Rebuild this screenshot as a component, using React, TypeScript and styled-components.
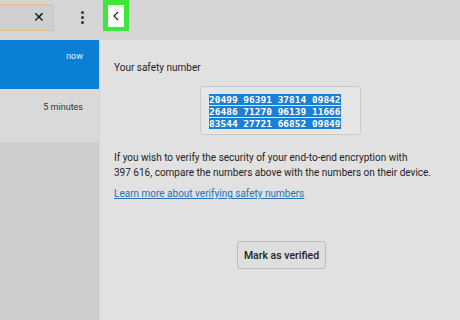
import React from "react";
import styled, { createGlobalStyle } from "styled-components";

const Global = createGlobalStyle`
  html, body { margin: 0; padding: 0; }
  body { font-family: Roboto, "Liberation Sans", sans-serif; background: #e1e1e1; }
`;

const Frame = styled.div`
  width: 460px;
  height: 320px;
  overflow: hidden;
  display: flex;
  flex-direction: column;
  background: #e1e1e1;
`;

const TopBar = styled.div`
  height: 40px;
  flex: none;
  display: flex;
  align-items: flex-start;
  background: #d5d5d5;
`;

const SearchArea = styled.div`
  width: 99px;
  flex: none;
  display: flex;
  align-items: center;
  height: 34px;
`;

const SearchBox = styled.div`
  box-sizing: border-box;
  margin-left: -10px;
  width: 64px;
  height: 27px;
  border: 1px solid #e4c08e;
  background: #cfcfcf;
  display: flex;
  align-items: center;
  justify-content: flex-end;
  padding-right: 8px;
  color: #111;
  font-size: 14px;
`;

const Kebab = styled.div`
  margin-left: 27px;
  display: flex;
  flex-direction: column;
  gap: 2px;
  span {
    width: 3px;
    height: 3px;
    border-radius: 50%;
    background: #333;
  }
`;

const Highlight = styled.div`
  margin-left: 4px;
  width: 26px;
  height: 31px;
  box-sizing: border-box;
  background: #3fe63a;
  padding: 5px 5px 4px;
  display: flex;
`;

const BackBtn = styled.div`
  flex: 1;
  background: #fbfbfb;
  display: flex;
  align-items: center;
  justify-content: center;
`;

const Body = styled.div`
  flex: 1;
  display: flex;
  min-height: 0;
`;

const Sidebar = styled.div`
  width: 99px;
  flex: none;
  background: #cecece;
  display: flex;
  flex-direction: column;
`;

const Item = styled.div<{ $active?: boolean }>`
  height: ${(p) => (p.$active ? 49 : 53)}px;
  background: ${(p) => (p.$active ? "#0b7fd3" : "#d9d9d9")};
  color: ${(p) => (p.$active ? "#e8f2fb" : "#333")};
  font-size: 9px;
  text-align: right;
  box-sizing: border-box;
  padding: ${(p) => (p.$active ? "11px 16px 0 0" : "13px 16px 0 0")};
`;

const Main = styled.div`
  flex: 1;
  background: #e1e1e1;
  border-left: 1px solid #d7d7d7;
  padding: 22px 0 0 14px;
  color: #1e1e1e;
  font-size: 10px;
`;

const Title = styled.div`
  font-size: 10px;
  line-height: 12px;
`;

const NumberBox = styled.div`
  margin: 12px 0 0 86px;
  width: 161px;
  height: 49px;
  box-sizing: border-box;
  border: 1px solid #cacaca;
  border-radius: 3px;
  background: #e6e6e6;
  padding: 7px 0 0 8px;
`;

const Digits = styled.pre`
  margin: 0;
  font-family: "DejaVu Sans Mono", "Liberation Mono", monospace;
  font-weight: bold;
  font-size: 9.5px;
  line-height: 12px;
  color: #fff;
  span {
    background: #1a7fd6;
  }
`;

const Para = styled.p`
  margin: 15px 0 0;
  font-size: 10px;
  line-height: 15px;
  white-space: nowrap;
`;

const Link = styled.a`
  display: inline-block;
  margin-top: 8px;
  font-size: 10px;
  color: #2b70b5;
  text-decoration: underline;
`;

const ButtonRow = styled.div`
  margin-top: 42px;
  padding-left: 123px;
`;

const Button = styled.button`
  width: 89px;
  height: 28px;
  border: 1px solid #bcbcbc;
  border-radius: 3px;
  background: #dedede;
  font-family: Roboto, "Liberation Sans", sans-serif;
  font-weight: 500;
  font-size: 10.5px;
  color: #222;
  padding: 0;
`;

export default function App() {
  return (
    <Frame>
      <Global />
      <TopBar>
        <SearchArea>
          <SearchBox>✕</SearchBox>
          <Kebab>
            <span />
            <span />
            <span />
          </Kebab>
        </SearchArea>
        <Highlight>
          <BackBtn>
            <svg width="8" height="10" viewBox="0 0 8 10">
              <path d="M6 1 L2 5 L6 9" stroke="#222" strokeWidth="1.2" fill="none" />
            </svg>
          </BackBtn>
        </Highlight>
      </TopBar>
      <Body>
        <Sidebar>
          <Item $active>now</Item>
          <Item>5 minutes</Item>
        </Sidebar>
        <Main>
          <Title>Your safety number</Title>
          <NumberBox>
            <Digits>
              <span>20499 96391 37814 09842</span>
              {"\n"}
              <span>26486 71270 96139 11666</span>
              {"\n"}
              <span>83544 27721 66852 09849</span>
            </Digits>
          </NumberBox>
          <Para>
            If you wish to verify the security of your end-to-end encryption with
            <br />
            397 616, compare the numbers above with the numbers on their device.
          </Para>
          <Link>Learn more about verifying safety numbers</Link>
          <ButtonRow>
            <Button>Mark as verified</Button>
          </ButtonRow>
        </Main>
      </Body>
    </Frame>
  );
}
